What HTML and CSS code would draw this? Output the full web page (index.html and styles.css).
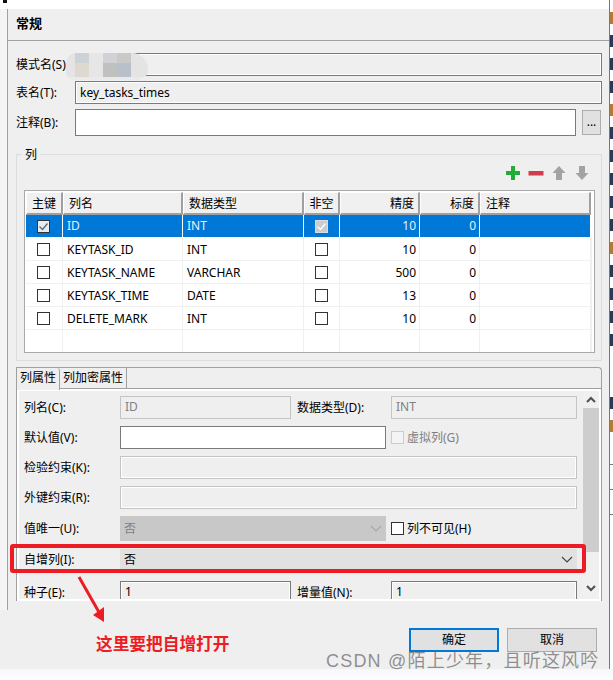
FILE: index.html
```html
<!DOCTYPE html>
<html lang="zh">
<head>
    <meta charset="UTF-8">
    <title>常规</title>
    <link rel="stylesheet" href="styles.css">
</head>
<body>
<div class="app">
    <div class="dialog">
        <div class="main">
            <div class="head">常规</div>

            <div class="row first">
                <label class="lbl">模式名(S)</label>
                <div class="inp ro grow"></div>
            </div>
            <div class="row">
                <label class="lbl">表名(T):</label>
                <div class="inp ro grow key">key_tasks_times</div>
            </div>
            <div class="row tall">
                <label class="lbl">注释(B):</label>
                <div class="inp white grow"></div>
                <div class="more">...</div>
            </div>

            <div class="group">
                <div class="legend">列</div>
                <div class="tools">
                    <svg width="16" height="16" viewBox="0 0 16 16"><path d="M6 1h4v5h5v4h-5v5H6v-5H1V6h5z" fill="#22ac38"/></svg>
                    <svg width="16" height="16" viewBox="0 0 16 16"><rect x="0.5" y="6" width="15" height="4.5" fill="#d33c50"/></svg>
                    <svg width="16" height="16" viewBox="0 0 16 16"><path d="M8 1l6.500 7H11v7H5V8H1.500z" fill="#a3a3a3"/></svg>
                    <svg width="16" height="16" viewBox="0 0 16 16"><path d="M5 1h6v7h3.500L8 15 1.500 8H5z" fill="#a3a3a3"/></svg>
                </div>
                <div class="grid-wrap">
                    <table class="grid">
                        <colgroup>
                            <col class="c1"><col class="c2"><col class="c3"><col class="c4"><col class="c5"><col class="c6"><col class="c7"><col class="c8">
                        </colgroup>
                        <thead>
                            <tr>
                                <th class="mid">主键</th><th>列名</th><th>数据类型</th><th class="mid">非空</th>
                                <th class="num">精度</th><th class="num">标度</th><th>注释</th><th class="end"></th>
                            </tr>
                        </thead>
                        <tbody>
                            <tr class="sel">
                                <td class="mid"><span class="chk on"><svg width="11" height="11" viewBox="0 0 11 11"><path d="M1.500 5.500l3 3 5-6" fill="none" stroke="#666" stroke-width="1.300"/></svg></span></td>
                                <td>ID</td><td>INT</td>
                                <td class="mid"><span class="chk off"><svg width="11" height="11" viewBox="0 0 11 11"><path d="M1.500 5.500l3 3 5-6" fill="none" stroke="#fff" stroke-width="1.300"/></svg></span></td>
                                <td class="num">10</td><td class="num">0</td><td></td><td></td>
                            </tr>
                            <tr>
                                <td class="mid"><span class="chk"></span></td><td>KEYTASK_ID</td><td>INT</td>
                                <td class="mid"><span class="chk"></span></td><td class="num">10</td><td class="num">0</td><td></td><td></td>
                            </tr>
                            <tr>
                                <td class="mid"><span class="chk"></span></td><td>KEYTASK_NAME</td><td>VARCHAR</td>
                                <td class="mid"><span class="chk"></span></td><td class="num">500</td><td class="num">0</td><td></td><td></td>
                            </tr>
                            <tr>
                                <td class="mid"><span class="chk"></span></td><td>KEYTASK_TIME</td><td>DATE</td>
                                <td class="mid"><span class="chk"></span></td><td class="num">13</td><td class="num">0</td><td></td><td></td>
                            </tr>
                            <tr>
                                <td class="mid"><span class="chk"></span></td><td>DELETE_MARK</td><td>INT</td>
                                <td class="mid"><span class="chk"></span></td><td class="num">10</td><td class="num">0</td><td></td><td></td>
                            </tr>
                            <tr class="blank">
                                <td></td><td></td><td></td><td></td><td></td><td></td><td></td><td></td>
                            </tr>
                        </tbody>
                    </table>
                </div>
            </div>

            <div class="tabbox">
                <div class="tabs">
                    <div class="tab active">列属性</div>
                    <div class="tab">列加密属性</div>
                </div>
                <div class="panel">
                    <div class="props">
                        <div class="prop">
                            <label class="plbl">列名(C):</label>
                            <div class="inp dis w-short">ID</div>
                            <label class="plbl2">数据类型(D):</label>
                            <div class="inp dis w-right">INT</div>
                        </div>
                        <div class="prop">
                            <label class="plbl">默认值(V):</label>
                            <div class="inp white w-mid"></div>
                            <span class="chk dim after"></span>
                            <span class="gray">虚拟列(G)</span>
                        </div>
                        <div class="prop">
                            <label class="plbl">检验约束(K):</label>
                            <div class="inp ro light w-full"></div>
                        </div>
                        <div class="prop">
                            <label class="plbl">外键约束(R):</label>
                            <div class="inp ro light w-full"></div>
                        </div>
                        <div class="prop sel-row">
                            <label class="plbl">值唯一(U):</label>
                            <div class="drop dead w-mid">否
                                <svg width="12" height="7" viewBox="0 0 12 7"><path d="M1 1l5 5 5-5" fill="none" stroke="#a8a8a8" stroke-width="1.200"/></svg>
                            </div>
                            <span class="chk after"></span>
                            <span>列不可见(H)</span>
                        </div>
                        <div class="prop auto-row">
                            <label class="plbl">自增列(I):</label>
                            <div class="drop w-full">否
                                <svg width="12" height="7" viewBox="0 0 12 7"><path d="M1 1l5 5 5-5" fill="none" stroke="#444" stroke-width="1.200"/></svg>
                            </div>
                        </div>
                        <div class="prop seed-row">
                            <label class="plbl">种子(E):</label>
                            <div class="inp ro w-short dark">1</div>
                            <label class="plbl2">增量值(N):</label>
                            <div class="inp ro w-right dark">1</div>
                        </div>
                    </div>
                    <div class="scroll">
                        <svg width="16" height="17" viewBox="0 0 16 17"><path d="M4 11l4-4 4 4" fill="none" stroke="#505050" stroke-width="2"/></svg>
                        <div class="thumb"></div>
                        <svg width="16" height="17" viewBox="0 0 16 17"><path d="M4 6l4 4 4-4" fill="none" stroke="#505050" stroke-width="2"/></svg>
                    </div>
                </div>
            </div>
        </div>

        <div class="footer">
            <div class="note">这里要把自增打开</div>
            <div class="btn primary">确定</div>
            <div class="btn">取消</div>
        </div>
    </div>

    <!-- 后面窗口露出来的一条，只剩碎片 -->
    <div class="side">
        <p class="o"></p><p></p><p></p><p></p><p class="o"></p><p></p><p></p><p></p>
        <p></p><p></p><p class="o"></p><p></p><p></p><p></p><p></p>
        <p class="gap"></p><p></p><p class="o"></p><p class="line"></p><p class="line"></p><p class="line"></p>
    </div>
</div>
<div class="bottom"></div>

<!-- 截图上的标注 -->
<div class="corner"></div>
<div class="mosaic">
    <i></i><i></i><i></i><i></i><i></i><i></i><i></i><i></i>
</div>
<div class="redbox"></div>
<svg class="arrow" width="40" height="60" viewBox="0 0 40 60">
    <path d="M3 2l21 37" fill="none" stroke="#ed1c24" stroke-width="3"/>
    <path d="M28 47l-11-7 11-8z" fill="#ed1c24"/>
</svg>
<div class="mark">CSDN @陌上少年，且听这风吟</div>
</body>
</html>
```

FILE: styles.css
```css
* {
    margin: 0;
    padding: 0;
    box-sizing: border-box;
}

body {
    width: 613px;
    height: 680px;
    background: #fff;
    position: relative;
    overflow: hidden;
    font-family: "Noto Sans", "Noto Sans CJK SC", sans-serif;
    font-size: 12px;
    line-height: 16px;
    color: #000;
}

.app {
    display: flex;
    height: 669px;
}

.dialog {
    width: 609px;
    padding-top: 9px;
    display: flex;
    flex-direction: column;
    background: linear-gradient(#fff 9px, #f4f4f4 9px);
}

.main {
    height: 601px;
    margin-left: 7px;
    padding-left: 8px;
    padding-right: 7px;
    background: #efefef;
    border-left: 1px solid #a0a0a0;
}

.head {
    height: 32px;
    margin: 0 -7px 0 -8px;
    padding: 6px 0 0 8px;
    font-weight: bold;
    font-size: 13px;
    border-bottom: 1px solid #a0a0a0;
}

/* top rows */
.row {
    display: flex;
    align-items: center;
    height: 23px;
    margin-bottom: 5px;
}
.row.first {
    margin-top: 12px;
}
.row.tall {
    height: 27px;
}
.lbl {
    width: 59px;
}
.grow {
    flex: 1;
}

.inp {
    height: 100%;
    padding: 2px 4px;
    border: 1px solid #7a7a7a;
}
.inp.key {
    padding-top: 3px;
}
.inp.ro {
    background: #efefef;
    box-shadow: inset 0 0 0 1px #fff;
}
.inp.white {
    background: #fff;
}
.inp.dis {
    color: #808080;
    background: #efefef;
    border: 1px solid #c4c4c4;
}
.inp.light {
    border-color: #c4c4c4;
}
.inp.dark {
    color: #000;
}

.more {
    width: 19px;
    height: 25px;
    margin: 0 1px 0 6px;
    background: #e1e1e1;
    border: 1px solid #adadad;
    text-align: center;
    line-height: 22px;
}

/* 列 group */
.group {
    height: 207px;
    margin-top: 18px;
    padding: 0 7px;
    border: 1px solid #dcdcdc;
    position: relative;
}
.legend {
    position: absolute;
    left: 5px;
    top: -8px;
    padding: 0 3px;
    background: #efefef;
}
.tools {
    height: 35px;
    padding: 10px 4px 0 0;
    display: flex;
    justify-content: flex-end;
    gap: 7px;
}
.grid-wrap {
    width: 571px;
    height: 163px;
    padding: 1px;
    background: #fff;
    border: 1px solid #a9a9a9;
}
.grid {
    width: 566px;
    table-layout: fixed;
    border-collapse: separate;
    border-spacing: 0;
}
.c1 { width: 37px; }
.c2 { width: 120px; }
.c3 { width: 121px; }
.c4 { width: 36px; }
.c5 { width: 80px; }
.c6 { width: 60px; }
.c7 { width: 111px; }
.c8 { width: 1px; }

.grid th {
    height: 23px;
    padding: 1px 0 0 5px;
    font-weight: normal;
    text-align: left;
    background: #f0f0f0;
    border-top: 1px solid #fff;
    border-left: 1px solid #fff;
    border-right: 2px solid #a0a0a0;
    border-bottom: 2px solid #a0a0a0;
}
.grid th.mid {
    padding: 1px 0 0;
    text-align: center;
}
.grid th.num {
    padding: 1px 4px 0 0;
    text-align: right;
}
.grid th.end {
    padding: 0;
    border: 0;
    background: #fff;
}
.grid td {
    height: 23px;
    padding: 1px 0 0 4px;
    border-right: 1px solid #f0f0f0;
    border-bottom: 1px solid #f0f0f0;
    overflow: hidden;
    white-space: nowrap;
}
.grid td.mid {
    padding: 0;
    text-align: center;
}
.grid td.mid .chk {
    margin-right: 1px;
}
.grid td.num {
    padding: 1px 3px 0 0;
    text-align: right;
}
.grid .sel td {
    padding-top: 0;
    color: #e6f0fa;
    background: #0078d7;
    border-right-color: #fff;
    border-bottom-color: #fff;
}
.grid .blank td {
    height: 22px;
    border-bottom: 0;
}

.chk {
    display: inline-block;
    width: 13px;
    height: 13px;
    background: #fff;
    border: 1px solid #333;
    vertical-align: middle;
}
.chk svg {
    display: block;
}
.chk.on {
    background: #e4edf6;
}
.chk.off {
    background: #ccc;
    border-color: #ddd;
}
.chk.dim {
    border-color: #ccc;
    background: #f4f4f4;
}

/* tabs */
.tabbox {
    height: 234px;
    margin-top: 6px;
    border: 1px solid #a0a0a0;
    border-bottom-color: #8c8c8c;
    border-radius: 0 4px 0 0;
}
.tabs {
    display: flex;
    height: 21px;
    border-bottom: 1px solid #a0a0a0;
}
.tab {
    padding: 2px 3px 0 3px;
    border-right: 1px solid #a0a0a0;
}
.tab.active {
    height: 22px;
    width: 43px;
    background: #efefef;
    border-radius: 3px 3px 0 0;
    position: relative;
}
.panel {
    display: flex;
    height: 212px;
    border: 2px solid #fff;
    overflow: hidden;
}
.props {
    width: 564px;
    padding: 5px 0 0 5px;
}
.prop {
    display: flex;
    align-items: center;
    height: 23px;
    margin-bottom: 7px;
}
.plbl {
    width: 96px;
    flex: none;
}
.plbl2 {
    width: 94px;
    margin-left: 6px;
    flex: none;
}
.w-short { width: 171px; flex: none; }
.w-right { width: 186px; flex: none; }
.w-mid { width: 266px; flex: none; }
.w-full { width: 457px; flex: none; }
.after {
    margin-left: 5px;
    margin-right: 3px;
}
.gray {
    color: #808080;
}
.drop {
    height: 100%;
    padding: 2px 4px;
    background: #e1e1e1;
    display: flex;
    justify-content: space-between;
    align-items: center;
}
.drop.dead {
    background: #c8c8c8;
    color: #808080;
}
.drop svg {
    flex: none;
}
.prop.sel-row {
    height: 25px;
    margin-bottom: 8px;
}
.prop.auto-row {
    height: 21px;
    margin-bottom: 11px;
}

.scroll {
    width: 16px;
    background: #f0f0f0;
    display: flex;
    flex-direction: column;
    justify-content: flex-start;
}
.thumb {
    height: 144px;
    margin-bottom: 28px;
    background: #cdcdcd;
}

/* footer */
.footer {
    height: 59px;
    padding-top: 18px;
    display: flex;
    background: #efefef;
}
.note {
    margin: 6px 0 0 96px;
    font-size: 16.700px;
    line-height: 20px;
    font-weight: bold;
    color: #ed1c24;
    white-space: nowrap;
}
.btn {
    width: 90px;
    height: 24px;
    margin-left: 8px;
    background: #e1e1e1;
    border: 1px solid #adadad;
    text-align: center;
    line-height: 22px;
}
.btn.primary {
    margin-left: auto;
    margin-right: 0;
    border: 2px solid #0078d7;
    line-height: 20px;
}
.footer .btn:last-child {
    margin-right: 12px;
}

.side {
    width: 4px;
    border-left: 1px solid #777;
    overflow: hidden;
    padding-top: 9px;
}
.side p {
    height: 23px;
    padding: 3px 0 8px;
    background: #2a3a55 content-box;
}
.side p.o {
    background-color: #b5793a;
}
.side p.gap {
    height: 40px;
    background: none;
}
.side p.line {
    height: 25px;
    padding: 0;
    background: none;
    border-bottom: 1px solid #777;
}

.bottom {
    height: 11px;
    background: linear-gradient(#f5f8fb, #fdfdfe);
}

/* annotations on top of the screenshot */
.corner {
    position: absolute;
    left: 3px;
    top: 0;
    width: 4px;
    height: 3px;
    background: #111;
}
.mosaic {
    position: absolute;
    left: 66px;
    top: 53px;
    width: 82px;
    height: 27px;
    padding-left: 9px;
    display: grid;
    grid-template-columns: repeat(4, 14px);
    grid-template-rows: 10px 14px;
    background: linear-gradient(#e4e4e4 0 24px, #eaeaea 24px);
    border-radius: 10px 16px 10px 8px;
}
.mosaic i:nth-child(1) { background: #cdd2d6; }
.mosaic i:nth-child(2) { background: #e6e6e6; }
.mosaic i:nth-child(3) { background: #d0d2d6; }
.mosaic i:nth-child(4) { background: #c9c9c9; }
.mosaic i:nth-child(5) { background: #dfd8d0; }
.mosaic i:nth-child(6) { background: #e6e6e6; }
.mosaic i:nth-child(7) { background: #bfc1bf; }
.mosaic i:nth-child(8) { background: #b8c1ca; }

.redbox {
    position: absolute;
    left: 10px;
    top: 544px;
    width: 576px;
    height: 29px;
    border: 4px solid #ed1c24;
    border-radius: 3px;
}
.arrow {
    position: absolute;
    left: 76px;
    top: 575px;
}
.mark {
    position: absolute;
    left: 326px;
    top: 650px;
    font-family: "Liberation Sans", "Noto Sans CJK SC", sans-serif;
    font-size: 18px;
    line-height: 22px;
    letter-spacing: 1.200px;
    color: rgba(110, 110, 110, 0.75);
    white-space: nowrap;
}
```
